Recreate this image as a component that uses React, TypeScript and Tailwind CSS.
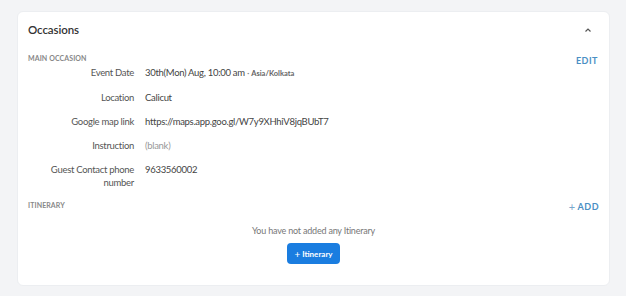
import React from "react";

const rows: { label: string; value: React.ReactNode }[] = [
  {
    label: "Event Date",
    value: (
      <>
        30th(Mon) Aug, 10:00 am <span className="text-[#888]">·</span>{" "}
        <span className="text-[7.5px] font-bold tracking-normal text-[#666]">Asia/Kolkata</span>
      </>
    ),
  },
  { label: "Location", value: "Calicut" },
  { label: "Google map link", value: "https://maps.app.goo.gl/W7y9XHhiV8jqBUbT7" },
  { label: "Instruction", value: <span className="text-[#999]">(blank)</span> },
  { label: "Guest Contact phone number", value: "9633560002" },
];

export default function App() {
  return (
    <div
      className="w-[626px] h-[296px] bg-[#f3f4f6] pt-[11px] pl-[17px] pr-[16px]"
      style={{ fontFamily: "Lato, 'Noto Sans', sans-serif" }}
    >
      <div className="h-[275px] bg-white rounded-[6px] border border-[#eceef1] px-[10px]">
        {/* header */}
        <div className="flex items-center justify-between h-[36px]">
          <h2 className="text-[11.5px] font-semibold tracking-[-0.1px] text-[#333]">Occasions</h2>
          <svg width="8" height="6" viewBox="0 0 8 6" className="mr-[7px] -mt-[1px]">
            <path d="M1.5 4.5 L4 2 L6.5 4.5" fill="none" stroke="#555" strokeWidth="1.2" />
          </svg>
        </div>

        {/* main occasion */}
        <div className="flex items-start justify-between mt-[5px] h-[10px]">
          <div className="text-[7px] leading-[10px] font-bold tracking-[0.1px] text-[#888]">MAIN OCCASION</div>
          <button className="text-[9px] leading-[10px] font-bold tracking-[0.5px] text-[#4a8fc4] mr-[1px] mt-[3px]">EDIT</button>
        </div>

        <div className="flex flex-col gap-[11px] mt-[3px] text-[9.5px] leading-[13px] tracking-[-0.3px] text-[#444]">
          {rows.map((r) => (
            <div key={r.label} className="flex">
              <div className="w-[106px] text-right text-[#555] shrink-0">{r.label}</div>
              <div className="pl-[11px]">{r.value}</div>
            </div>
          ))}
        </div>

        {/* itinerary */}
        <div className="flex items-start justify-between mt-[11px] h-[10px]">
          <div className="text-[7px] leading-[10px] font-bold tracking-[0.1px] text-[#888]">ITINERARY</div>
          <button className="flex items-center gap-[2px] text-[9px] leading-[10px] font-bold tracking-[0.5px] text-[#4a8fc4] mt-[1px]">
            <span className="font-normal text-[11px] leading-none text-[#7aa7cc]">+</span>ADD
          </button>
        </div>

        <div className="flex flex-col items-center mt-[15px]">
          <p className="text-[9px] leading-[12px] tracking-[-0.2px] text-[#777]">You have not added any Itinerary</p>
          <button className="mt-[6px] h-[21px] px-[7px] rounded-[4px] bg-[#1a7de0] text-white text-[8px] font-bold flex items-center gap-[2px]">
            <span className="font-normal text-[10px] leading-none">+</span>Itinerary
          </button>
        </div>
      </div>
    </div>
  );
}
